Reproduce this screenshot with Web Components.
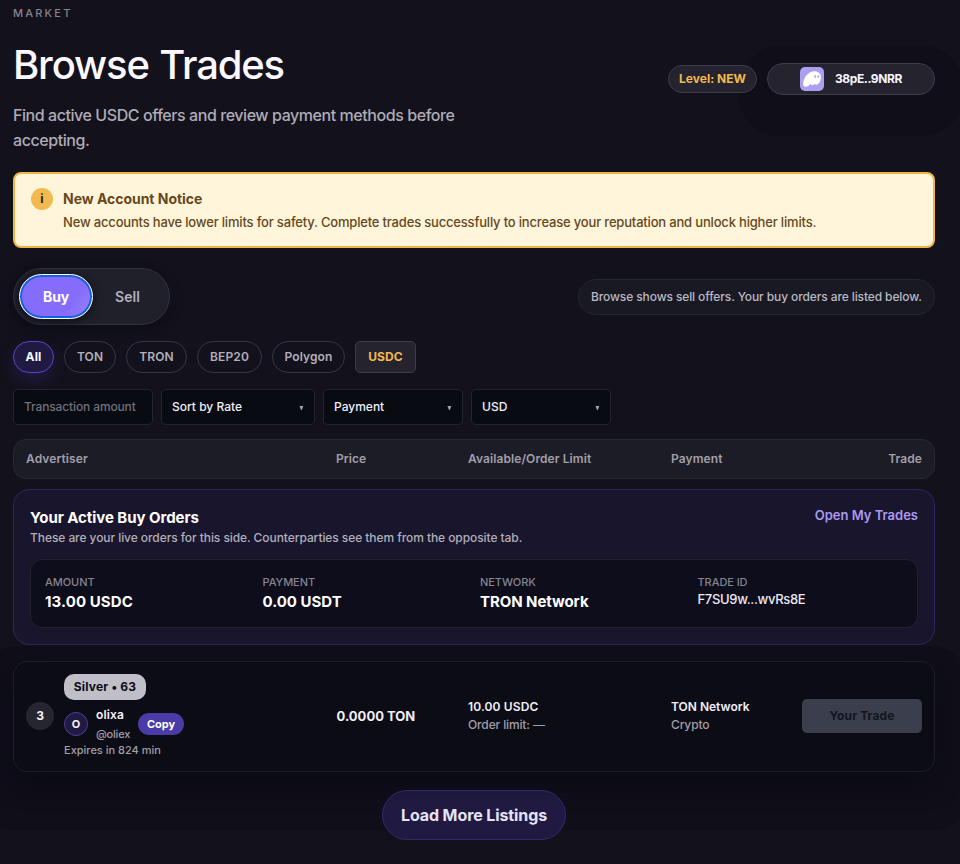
<!DOCTYPE html>
<html lang="en">
<head>
<meta charset="utf-8">
<title>Browse Trades</title>
<style>
html,body{margin:0;height:864px;overflow:hidden;background:#13111b}
body{font-family:Inter,"Liberation Sans",sans-serif;color:#f4f2fb}
</style>
</head>
<body>
<market-page></market-page>
<script>
const define = (name, css, html) => customElements.define(name, class extends HTMLElement {
  constructor() {
    super();
    const t = document.createElement('template');
    t.innerHTML = `<style>*{box-sizing:border-box}:host{box-sizing:border-box}${css}</style>${html}`;
    this.attachShadow({mode: 'open'}).append(t.content.cloneNode(true));
  }
});

define('page-header', `
  :host{display:flex;align-items:center;justify-content:space-between;height:147px}
  .eyebrow{font:500 11px/14px Inter;letter-spacing:2.2px;color:#85838f}
  h1{margin:21px 0 14px;font:500 40px/48px Inter;letter-spacing:-1.15px;word-spacing:1px;color:#fbf9ff}
  p{margin:0;max-width:450px;font:500 16px/25px Inter;letter-spacing:-.435px;color:#aeacb7}
  .right{display:flex;align-items:center;gap:10px;padding-bottom:2px}
`, `<div><div class="eyebrow">MARKET</div><h1>Browse Trades</h1>
  <p>Find active USDC offers and review payment methods before accepting.</p></div>
  <div class="right"><slot></slot></div>`);

define('level-pill', `
  :host{display:flex;align-items:center;justify-content:center;width:89px;height:28px;border:1px solid #3a3c49;border-radius:14px;background:#24232e;position:relative;z-index:1;font:700 12px/16px Inter;letter-spacing:.04px;color:#f2b94e}
`, `<slot></slot>`);

define('wallet-pill', `
  :host{display:flex;align-items:center;width:168px;height:32px;padding-left:32px;gap:11px;border:1px solid #3b3e4b;border-radius:16px;background:#24232e;box-shadow:0 12px 0 29px #0f0e19;font:700 12px/16px Inter;letter-spacing:-.4px;color:#f8f6ff}
  svg{display:block}
`, `<svg width="24" height="24" viewBox="0 0 24 24"><rect width="24" height="24" rx="5" fill="#ab9ff2"/>
  <path d="M3.1 17.2C3.1 10.8 8.6 4.3 14.4 4.3C18.3 4.3 20.9 6.8 20.9 10.3C20.9 14.6 18.6 17.8 16.4 17.8C15.4 17.8 15.1 17.1 15.3 16.2C14.5 17.4 13.5 18.2 12.3 18.2C11.2 18.2 10.8 17.4 11 16.4C9.7 18.2 7.7 19.7 5.7 19.7C4 19.7 3.1 18.8 3.1 17.2Z" fill="#fffdf8"/>
  <ellipse cx="15.2" cy="9.5" rx=".9" ry="1.35" fill="#ab9ff2"/><ellipse cx="18.3" cy="9.5" rx=".9" ry="1.35" fill="#ab9ff2"/></svg><slot></slot>`);

define('account-notice', `
  :host{display:flex;gap:10px;height:76px;margin-top:19px;padding:14px 16px;border:2px solid #f0b546;border-radius:8px;background:#fff5db;color:#66481a}
  i{flex:none;width:22px;height:22px;border-radius:50%;background:#f1b94f;color:#24180c;font:700 12px/22px Inter;text-align:center}
  b{display:block;font:700 14px/22px Inter;letter-spacing:-.03px;margin-bottom:2px}
  p{margin:0;font:500 13px/20px Inter;letter-spacing:-.18px;white-space:nowrap}
`, `<i>i</i><div><b><slot name="title"></slot></b><p><slot></slot></p></div>`);

define('side-toggle', `
  :host{display:flex;width:157px;height:57px;padding:5px;border:1px solid #31333f;border-radius:29px;background:#1f202a;box-shadow:0 4px 12px 0 #0e0d18;font:600 14px/43px Inter;text-align:center;letter-spacing:.05px}
  .buy{width:74px;height:45px;border:1px solid #fff;border-radius:23px;background:linear-gradient(125deg,#866cfb 70%,#9a85fb);box-shadow:inset 0 0 0 2px #1265dc,0 2px 10px #0e0d18;color:#fff;font-weight:700;letter-spacing:-.15px}
  .sell{width:69px;line-height:45px;color:#b3b1bd}
`, `<div class="buy">Buy</div><div class="sell">Sell</div>`);

define('hint-pill', `
  :host{display:flex;align-items:center;width:357px;height:36px;padding:0 12px;border:1px solid #262531;border-radius:18px;background:#191923;font:500 12px/18px Inter;letter-spacing:-.11px;color:#bab8c3;white-space:nowrap}
`, `<slot></slot>`);

define('filter-chip', `
  :host{display:flex;align-items:center;justify-content:center;height:32px;border:1px solid #343743;border-radius:16px;font:600 12px/16px Inter;letter-spacing:.12px;color:#b1afbb}
  :host([active]){border-color:#5a45c0;background:#201a42;color:#fbf9ff;font-weight:700;box-shadow:0 7px 16px rgba(70,50,170,.3)}
  :host([token]){border-color:#3b3e4a;border-radius:5px;background:#24232e;color:#f2b94e;font-weight:700}
`, `<slot></slot>`);

define('filter-field', `
  :host{display:flex;align-items:center;justify-content:space-between;height:36px;width:140px;padding:0 10px;border:1px solid #25232e;border-radius:5px;background:#080b12;font:500 12px/16px Inter;color:#f0eef8}
  svg{display:none}
  :host([menu]) svg{display:block}
  :host(:not([menu])){letter-spacing:-.13px;color:#716f7b}
`, `<span><slot></slot></span><svg width="5" height="5" viewBox="0 0 5 5"><path d="M.5 .9H4.3L2.8 4.9H2Z" fill="#a4a2ae"/></svg>`);

define('table-head', `
  :host{display:grid;grid-template-columns:310px 132px 203px 1fr auto;align-items:center;height:40px;margin-top:14px;padding:0 12px;border:1px solid #282833;border-radius:13px;background:#1c1c26;font:600 12px/16px Inter;letter-spacing:.09px;color:#a19fa9}
`, `<span>Advertiser</span><span>Price</span><span>Available/Order Limit</span><span>Payment</span><span>Trade</span>`);

define('order-stat', `
  :host{display:block}
  .l{font:500 11px/16px Inter;letter-spacing:-.07px;color:#85838f}
  .v{font:700 15px/24px Inter;letter-spacing:var(--track,.1px);color:#fff}
  :host([plain]) .v{font:500 13px/19px Inter;letter-spacing:-.32px;color:#eae8f2}
`, `<div class="l"><slot name="label"></slot></div><div class="v"><slot></slot></div>`);

define('active-orders', `
  :host{display:block;height:156px;margin-top:10px;padding:16px;border:1px solid #2e255c;border-radius:16px;background:#19152c;position:relative;z-index:1}
  header{display:flex;justify-content:space-between;height:53px}
  b{display:block;font:700 15px/24px Inter;letter-spacing:-.05px;color:#fff}
  p{margin:0;font:500 12px/16px Inter;letter-spacing:-.072px;color:#b1afba}
  a{font:600 13px/19px Inter;color:#a99af4}
  .stats{display:grid;grid-template-columns:repeat(4,1fr);gap:12px;height:69px;padding:14px;border:1px solid #22212d;border-radius:12px;background:#0d0d1c}
`, `<header><div><b>Your Active Buy Orders</b><p>These are your live orders for this side. Counterparties see them from the opposite tab.</p></div><a>Open My Trades</a></header>
  <div class="stats"><slot></slot></div>`);

define('advertiser-cell', `
  :host{display:grid;grid-template-columns:28px auto;column-gap:10px;align-items:center;justify-content:start}
  .n{width:28px;height:28px;border-radius:50%;background:#272530;font:700 12px/28px Inter;text-align:center;color:#f4f2fb}
  .badge{width:82px;height:26px;border-radius:10px;background:#c0bfc8;color:#0c0c15;font:700 12px/26px Inter;letter-spacing:.2px;text-align:center}
  .user{display:flex;align-items:center;height:38px;margin-top:5px}
  .av{width:24px;height:24px;border:1px solid #4c3ba5;border-radius:50%;background:#201a40;font:700 11px/22px Inter;text-align:center}
  .id{width:42px;margin-left:8px;font:600 12px/19px Inter;letter-spacing:.15px}
  .id span{display:block;font:500 11px/20px Inter;letter-spacing:-.2px;color:#a19faa}
  .copy{width:46px;height:22px;border-radius:11px;background:#4b3ba6;font:700 11px/22px Inter;text-align:center;color:#fff}
  .exp{font:500 11px/14px Inter;letter-spacing:0;color:#a19faa}
`, `<div class="n">3</div><div><div class="badge">Silver • 63</div>
  <div class="user"><div class="av">O</div><div class="id">olixa<span>@oliex</span></div><div class="copy">Copy</div></div>
  <div class="exp">Expires in 824 min</div></div>`);

define('two-line', `
  :host{display:block;font:600 12px/18px Inter;letter-spacing:var(--track,.14px);color:#f0eef8}
  span{display:block;font-weight:500;letter-spacing:-.13px;color:#a19faa}
`, `<slot></slot><span><slot name="sub"></slot></span>`);

define('offer-row', `
  :host{display:grid;grid-template-columns:310px 132px 203px 1fr 120px;align-items:center;height:111px;margin-top:16px;padding:12px 12px 14px;border:1px solid #1e1e28;border-radius:14px;background:#0c0c15;box-shadow:0 12px 24px #0b0b15,0 22px 0 37px #0f0e19}
  .price{font:700 13px/18px Inter;color:#f0eef8;padding-left:.5px}
  .trade{height:34px;border-radius:5px;background:#3b3f4d;color:#14141d;font:700 12px/34px Inter;letter-spacing:.12px;text-align:center}
`, `<advertiser-cell></advertiser-cell><div class="price">0.0000 TON</div>
  <two-line>10.00 USDC<span slot="sub">Order limit: —</span></two-line>
  <two-line style="--track:0px">TON Network<span slot="sub">Crypto</span></two-line>
  <div class="trade">Your Trade</div>`);

define('load-more', `
  :host{display:block;width:184px;height:50px;margin:18px auto 0;border:1px solid #32286c;border-radius:25px;background:linear-gradient(#1c183a,#201a42 35%);font:700 16px/48px Inter;letter-spacing:-.1px;text-align:center;color:#e6e3f3;position:relative}
`, `<slot></slot>`);

define('market-page', `
  :host{display:block;height:864px;padding:6px 25px 0 13px;overflow:hidden}
  .bar{display:flex;align-items:center;justify-content:space-between;margin-top:20px}
  .chips{display:flex;gap:10px;margin-top:16px}
  .fields{display:flex;gap:8px;margin-top:16px}
`, `<page-header><level-pill>Level: NEW</level-pill><wallet-pill>38pE..9NRR</wallet-pill></page-header>
  <account-notice><span slot="title">New Account Notice</span>New accounts have lower limits for safety. Complete trades successfully to increase your reputation and unlock higher limits.</account-notice>
  <div class="bar"><side-toggle></side-toggle><hint-pill>Browse shows sell offers. Your buy orders are listed below.</hint-pill></div>
  <div class="chips"><filter-chip active style="width:41px">All</filter-chip><filter-chip style="width:52px">TON</filter-chip><filter-chip style="width:61px">TRON</filter-chip><filter-chip style="width:65px">BEP20</filter-chip><filter-chip style="width:73px">Polygon</filter-chip><filter-chip token style="width:61px">USDC</filter-chip></div>
  <div class="fields"><filter-field>Transaction amount</filter-field><filter-field menu style="width:154px">Sort by Rate</filter-field><filter-field menu>Payment</filter-field><filter-field menu>USD</filter-field></div>
  <table-head></table-head>
  <active-orders>
    <order-stat><span slot="label">AMOUNT</span>13.00 USDC</order-stat>
    <order-stat style="--track:0px"><span slot="label">PAYMENT</span>0.00 USDT</order-stat>
    <order-stat style="--track:-.07px"><span slot="label">NETWORK</span>TRON Network</order-stat>
    <order-stat plain><span slot="label">TRADE ID</span>F7SU9w...wvRs8E</order-stat>
  </active-orders>
  <offer-row></offer-row>
  <load-more>Load More Listings</load-more>`);
</script>
</body>
</html>
